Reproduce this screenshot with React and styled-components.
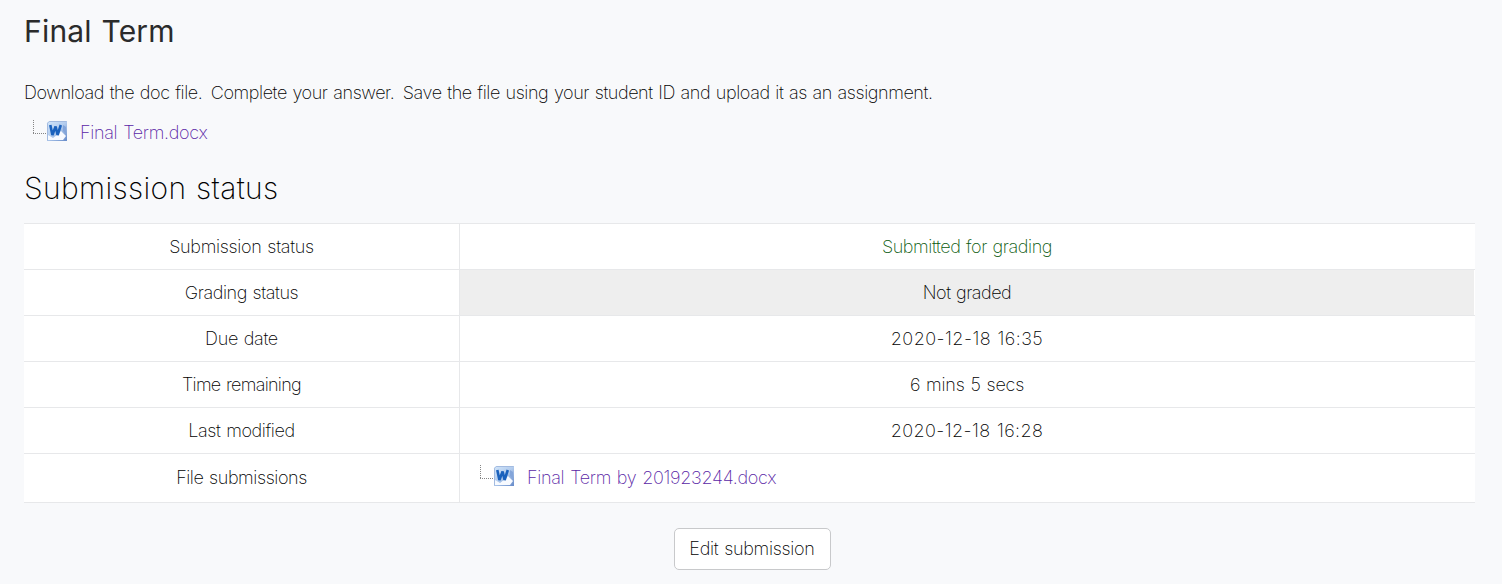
import React from 'react';
import styled, { createGlobalStyle } from 'styled-components';

const GlobalStyle = createGlobalStyle`
  * { box-sizing: border-box; }
  body {
    margin: 0;
    background: #f8f9fb;
    color: #000;
    font-family: Inter, "Liberation Sans", sans-serif;
    font-size: 18px;
    font-weight: 200;
    line-height: 26px;
    word-spacing: 1px;
    white-space: nowrap;
    font-feature-settings: "calt" 0;
  }
`;

const Page = styled.main`
  display: flex;
  flex-direction: column;
  height: 584px;
  padding: 11px 28px 0 24px;
  overflow: hidden;
`;

const Title = styled.h2`
  margin: 0;
  color: #2b2b2b;
  font-size: 30px;
  line-height: 40px;
  font-weight: 400;
  letter-spacing: 0.2px;
`;

const SectionTitle = styled.h3`
  margin: 22px 0 15px;
  color: #000;
  font-size: 30px;
  line-height: 40px;
  font-weight: 200;
  letter-spacing: 0.33px;
`;

const Intro = styled.p`
  display: flex;
  gap: 8.5px;
  margin: 29px 0 14px;
`;

const Text = styled.span`
  letter-spacing: ${(p) => p.$track}px;
`;

const FileRow = styled.div`
  display: flex;
  align-items: center;
  gap: 12px;
  height: 26px;
  padding-left: 8px;
  color: #5a1fa6;
`;

const FileLink = styled.a`
  color: inherit;
  text-decoration: none;
  letter-spacing: -0.3px;
`;

const TreeIcon = styled.svg`
  display: block;
  flex: none;
  margin-bottom: 4px;
`;

const Table = styled.div`
  display: flex;
  flex-direction: column;
  width: 1451px;
  border-top: 1px solid #e7e8ea;
  background: #fff;
`;

const Row = styled.div`
  display: grid;
  grid-template-columns: 435px 1fr;
  height: ${(p) => (p.$tall ? 49 : 46)}px;
  border-bottom: 1px solid #e7e8ea;
`;

const Label = styled.div`
  display: flex;
  align-items: center;
  justify-content: center;
`;

const Value = styled.div`
  display: flex;
  align-items: center;
  justify-content: ${(p) => (p.$file ? 'flex-start' : 'center')};
  border-left: 1px solid #e7e8ea;
  padding-left: ${(p) => (p.$file ? 11 : 0)}px;
  margin-right: 1px;
  background: ${(p) => (p.$tone === 'muted' ? '#eee' : 'transparent')};
  color: ${(p) => ({ success: '#07580b' })[p.$tone] || 'inherit'};
`;

const EditButton = styled.button`
  align-self: center;
  width: 157px;
  height: 42px;
  margin: 25px 0 0 6px;
  padding: 0 0 1px;
  border: 1px solid #c8c9cb;
  border-radius: 5px;
  background: #fff;
  color: inherit;
  font: inherit;
  word-spacing: inherit;
  letter-spacing: -0.28px;
`;

function WordFileIcon() {
  return (
    <TreeIcon width="36" height="22" viewBox="0 0 36 22">
      <defs>
        <linearGradient id="tile" x1="0" y1="0" x2="0.9" y2="1">
          <stop offset="0" stopColor="#d3e6fa" />
          <stop offset="0.5" stopColor="#b4cdee" />
          <stop offset="1" stopColor="#6c90cc" />
        </linearGradient>
      </defs>
      <path d="M1.5 0v14M1 13.5h14" fill="none" stroke="#858585" strokeDasharray="1 1" />
      <path d="M17 1H35V21H15V3Z" fill="url(#tile)" />
      <path d="M15.5 20.5V3.2L17.2 1.5H34.5" fill="none" stroke="#a3bbe0" />
      <path d="M16 15L21 18L26 14L29 11L32 14L34 16L31 20H16Z" fill="#f7faff" />
      <path d="M31 5L34 7V14L31 11Z" fill="#83a5da" />
      <path d="M18.3 5L20.4 15L23.6 6.500L25.600 15L28.800 5" fill="none" stroke="#1b62bd" strokeWidth="2.600" strokeLinejoin="bevel" />
    </TreeIcon>
  );
}

function FileItem({ name }) {
  return (
    <FileRow>
      <WordFileIcon />
      <FileLink href="#">{name}</FileLink>
    </FileRow>
  );
}

const intro = [
  'Download the doc file.',
  'Complete your answer.',
  'Save the file using your student ID and upload it as an assignment.',
];

const rows = [
  { label: 'Submission status', value: 'Submitted for grading', tone: 'success', lt: -0.3, vt: -0.42 },
  { label: 'Grading status', value: 'Not graded', tone: 'muted', lt: -0.42, vt: -0.5 },
  { label: 'Due date', value: '2020-12-18 16:35', lt: -0.3, vt: 0.45 },
  { label: 'Time remaining', value: '6 mins 5 secs', lt: -0.7, vt: -0.2 },
  { label: 'Last modified', value: '2020-12-18 16:28', lt: -0.4, vt: 0.4 },
];

export default function App() {
  return (
    <>
      <GlobalStyle />
      <Page>
        <Title>Final Term</Title>
        <Intro>
          {intro.map((sentence) => (
            <Text key={sentence} $track={-0.42}>{sentence}</Text>
          ))}
        </Intro>
        <FileItem name="Final Term.docx" />
        <SectionTitle>Submission status</SectionTitle>
        <Table>
          {rows.map((r) => (
            <Row key={r.label}>
              <Label><Text $track={r.lt}>{r.label}</Text></Label>
              <Value $tone={r.tone}><Text $track={r.vt}>{r.value}</Text></Value>
            </Row>
          ))}
          <Row $tall>
            <Label><Text $track={-0.42}>File submissions</Text></Label>
            <Value $file><FileItem name="Final Term by 201923244.docx" /></Value>
          </Row>
        </Table>
        <EditButton>Edit submission</EditButton>
      </Page>
    </>
  );
}
